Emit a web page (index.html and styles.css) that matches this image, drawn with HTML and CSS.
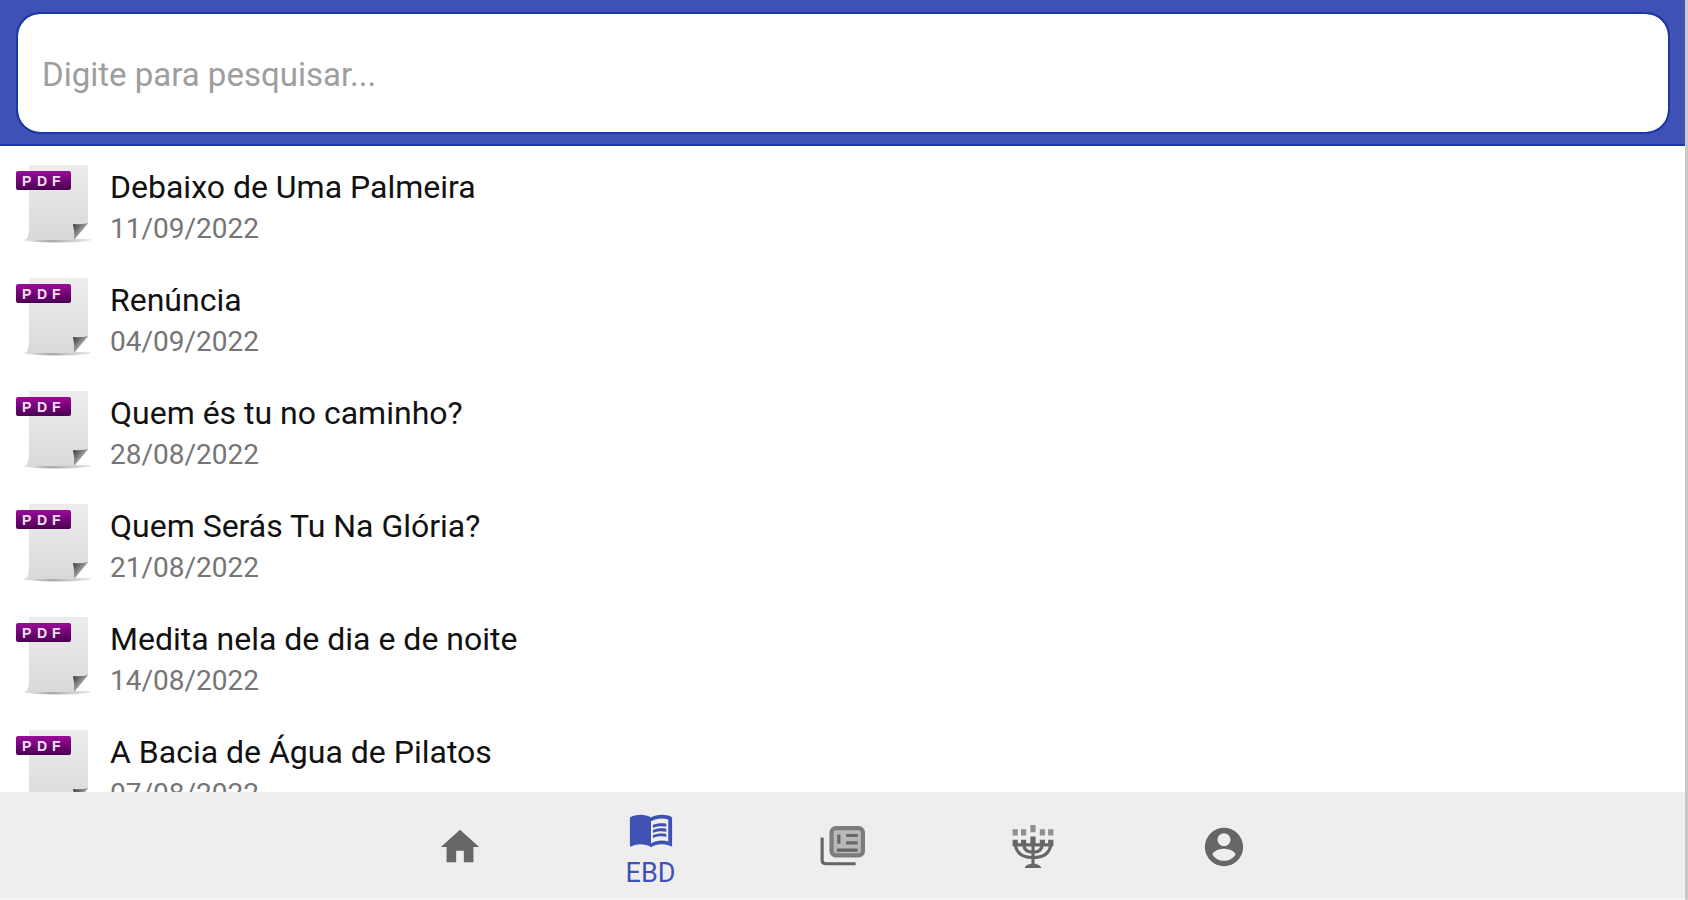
FILE: index.html
```html
<!DOCTYPE html>
<html lang="pt-BR">
<head>
<meta charset="utf-8">
<meta name="viewport" content="width=device-width, initial-scale=1">
<title>EBD</title>
<link rel="stylesheet" href="styles.css">
</head>
<body>
<svg class="defs" aria-hidden="true">
  <defs>
    <linearGradient id="paper" x1="0" y1="0" x2="0" y2="1"><stop offset="0" stop-color="#ededed"/><stop offset="1" stop-color="#d9d9d9"/></linearGradient>
    <linearGradient id="label" x1="0" y1="0" x2="0" y2="1"><stop offset="0" stop-color="#9a0b9c"/><stop offset="1" stop-color="#4a0050"/></linearGradient>
    <linearGradient id="fold" x1="0" y1="0" x2="1" y2="1"><stop offset="0.1" stop-color="#444"/><stop offset="0.6" stop-color="#b0b0b0"/></linearGradient>
    <linearGradient id="shade" x1="0" y1="0" x2="1" y2="0"><stop offset="0" stop-color="#b5b5b5" stop-opacity="0.3"/><stop offset="0.4" stop-color="#a8a8a8"/><stop offset="1" stop-color="#b5b5b5" stop-opacity="0.3"/></linearGradient>
    <symbol id="pdf" viewBox="0 0 76 80">
      <path d="M8 75h67l-2 2Q42 80 9 77z" fill="url(#shade)"/>
      <path d="M13 1h59v59L58 76H10q3-4 3-12z" fill="url(#paper)"/>
      <path d="M57 60q8 1 15-1L58 76q1-8-1-16z" fill="url(#fold)"/>
      <rect x="0" y="7" width="55" height="19" rx="2" fill="url(#label)"/>
      <text class="pdf-label" y="22"><tspan x="6">P</tspan><tspan x="21">D</tspan><tspan x="36">F</tspan></text>
    </symbol>
  </defs>
</svg>
<div class="app">
  <header class="search-bar">
    <input class="search" type="search" placeholder="Digite para pesquisar..." aria-label="Pesquisar">
  </header>
  <main class="content">
    <ul class="lessons">
      <li><a class="lesson" href="#"><svg class="pdf" aria-hidden="true"><use href="#pdf"/></svg><span class="text"><span class="title">Debaixo de Uma Palmeira</span><span class="date">11/09/2022</span></span></a></li>
      <li><a class="lesson" href="#"><svg class="pdf" aria-hidden="true"><use href="#pdf"/></svg><span class="text"><span class="title">Renúncia</span><span class="date">04/09/2022</span></span></a></li>
      <li><a class="lesson" href="#"><svg class="pdf" aria-hidden="true"><use href="#pdf"/></svg><span class="text"><span class="title">Quem és tu no caminho?</span><span class="date">28/08/2022</span></span></a></li>
      <li><a class="lesson" href="#"><svg class="pdf" aria-hidden="true"><use href="#pdf"/></svg><span class="text"><span class="title">Quem Serás Tu Na Glória?</span><span class="date">21/08/2022</span></span></a></li>
      <li><a class="lesson" href="#"><svg class="pdf" aria-hidden="true"><use href="#pdf"/></svg><span class="text"><span class="title">Medita nela de dia e de noite</span><span class="date">14/08/2022</span></span></a></li>
      <li><a class="lesson" href="#"><svg class="pdf" aria-hidden="true"><use href="#pdf"/></svg><span class="text"><span class="title">A Bacia de Água de Pilatos</span><span class="date">07/08/2022</span></span></a></li>
    </ul>
  </main>
  <nav class="tabs" aria-label="Principal">
    <a class="tab" href="#" aria-label="Início"><svg class="icon" viewBox="0 0 24 24" aria-hidden="true"><path d="M10 20v-6h4v6h5v-8h3L12 3 2 12h3v8z"/></svg></a>
    <a class="tab active" href="#" aria-current="page"><svg class="icon" viewBox="0 0 24 24" aria-hidden="true"><path d="M21 5c-1.110-.35-2.330-.5-3.500-.5-1.950 0-4.050.4-5.500 1.500-1.450-1.100-3.550-1.500-5.500-1.500S2.450 4.900 1 6v14.650c0 .25.25.5.5.5.1 0 .15-.05.25-.05C3.100 20.450 5.050 20 6.500 20c1.950 0 4.050.4 5.500 1.500 1.350-.85 3.800-1.500 5.500-1.500 1.650 0 3.350.3 4.750 1.050.1.050.15.050.25.050.25 0 .5-.25.5-.5V6c-.6-.45-1.250-.75-2-1zm0 13.500c-1.100-.35-2.300-.5-3.500-.5-1.700 0-4.150.65-5.500 1.500V8c1.350-.85 3.800-1.500 5.500-1.500 1.200 0 2.400.15 3.500.5v11.500z"/><path d="M17.500 10.500c.88 0 1.730.09 2.500.26V9.240c-.79-.15-1.640-.24-2.500-.24-1.700 0-3.240.29-4.500.83v1.660c1.130-.64 2.700-.99 4.500-.99zM13 12.490v1.660c1.130-.64 2.700-.99 4.500-.99.88 0 1.730.09 2.500.26V11.900c-.79-.15-1.640-.24-2.500-.24-1.700 0-3.240.3-4.500.83zm4.500 1.840c-1.700 0-3.240.29-4.500.83v1.660c1.130-.64 2.700-.99 4.500-.99.88 0 1.730.09 2.500.26v-1.520c-.79-.16-1.640-.24-2.500-.24z"/></svg><span>EBD</span></a>
    <a class="tab" href="#" aria-label="Notícias"><svg class="icon" viewBox="0 0 44 44" aria-hidden="true"><path d="M3 13v22q0 3 4 3h28" fill="none" stroke="currentColor" stroke-width="3"/><rect x="12" y="4" width="30" height="26" rx="4" fill="#b8b8b8" stroke="#7c7c7c" stroke-width="4"/><path d="M19 10v9M26 11h11M26 18h11M17 25h20" fill="none" stroke="currentColor" stroke-width="3"/></svg></a>
    <a class="tab" href="#" aria-label="Menorá"><svg class="icon" viewBox="0 0 44 44" aria-hidden="true"><g fill="none" stroke="currentColor" stroke-width="3"><path d="M5 20q2 12 17 12t17-12M13 20q1 7 9 7t9-7M22 14v25M3 20h38"/><path d="M5 15v6M13 15v6M22 12v9M31 15v6M39 15v6" stroke-width="5"/><path d="M5 5v6M13 5v6M22 1v7M31 5v6M39 5v6" stroke-width="5" stroke="#8f8f8f"/></g><path d="M14 42q1-3 6-4h4q5 1 6 4z"/></svg></a>
    <a class="tab" href="#" aria-label="Perfil"><svg class="icon" viewBox="0 0 24 24" aria-hidden="true"><path fill-rule="evenodd" d="M12 2a10 10 0 1 0 0 20 10 10 0 0 0 0-20zm0 2.800a3.400 3.400 0 1 1 0 6.800 3.400 3.400 0 0 1 0-6.800zM6 16c0-2 4-3.100 6-3.100s6 1.100 6 3.100c-1.300 1.900-3.500 3.200-6 3.200S7.300 17.900 6 16z"/></svg></a>
  </nav>
</div>
</body>
</html>
```
FILE: styles.css
```css
* { box-sizing: border-box; }
body { margin: 0; font-family: Roboto, "Liberation Sans", sans-serif; background: #fff; }
.defs { position: absolute; width: 0; height: 0; }
.app { display: flex; flex-direction: column; height: 100vh; border-right: 3px solid #c8c8c8; }
.search-bar { flex: none; padding: 14px 17px 12px 18px; background: #3f51b5; border-bottom: 2px solid #1b37a8; }
.search { display: block; width: 100%; height: 118px; padding: 2px 24px 0; border: 0; border-radius: 22px; outline: 2px solid #1b37a8; background: #fff; color: #000; font: 33px/40px Roboto, "Liberation Sans", sans-serif; appearance: none; }
.search::placeholder { color: #9e9e9e; opacity: 1; }
.content { flex: 1; min-height: 0; overflow: hidden; }
.lessons { margin: 0; padding: 8px 0 0; list-style: none; }
.lesson { display: flex; gap: 18px; height: 113px; padding: 10px 16px 0; color: #111; text-decoration: none; }
.pdf { flex: none; width: 76px; height: 80px; }
.pdf-label { font: 700 14px "Liberation Sans", sans-serif; fill: #f3dff4; }
.text { display: flex; flex-direction: column; gap: 4px; padding-top: 3px; }
.title { font-size: 32px; line-height: 40px; }
.date { font-size: 28px; line-height: 36px; color: #757575; }
.tabs { flex: none; display: flex; justify-content: center; height: 108px; padding-top: 4px; padding-right: 2px; background: #eee; border-bottom: 2px solid #f6f6f6; }
.tab { display: flex; flex-direction: column; align-items: center; justify-content: center; gap: 4px; width: 191px; color: #666; font-size: 27px; line-height: 34px; text-decoration: none; }
.tab.active { padding-top: 2px; color: #3f51b5; }
.icon { display: block; width: 46px; height: 46px; fill: currentColor; }
```
